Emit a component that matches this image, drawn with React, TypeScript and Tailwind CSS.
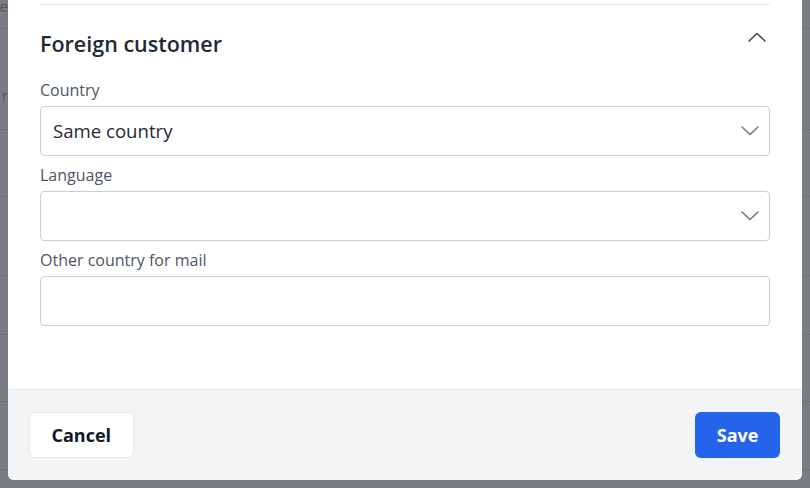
import React from 'react';

// Thin chevron used in the section header and in the select boxes
function Chevron({ up = false, className = '' }: { up?: boolean; className?: string }) {
  return (
    <svg width="18" height="10" viewBox="0 0 18 10" fill="none" className={className}>
      <path
        d={up ? 'M1 9 L9 1.5 L17 9' : 'M1 1 L9 8.5 L17 1'}
        stroke="currentColor"
        strokeWidth="1.5"
        strokeLinecap="round"
        strokeLinejoin="round"
      />
    </svg>
  );
}

function Field({ label, value, select }: { label: string; value?: string; select?: boolean }) {
  return (
    <div className="flex flex-col">
      <label className="text-[16px] leading-6 text-[#4b5563] mb-1">{label}</label>
      <div className="h-[50px] rounded border border-[#c9cdd3] bg-white flex items-center justify-between pl-3 pr-[10px]">
        <span className="text-[18.6px] text-[#1f2937]">{value}</span>
        {select && <Chevron className="text-[#6b7280]" />}
      </div>
    </div>
  );
}

// Dimmed page rows behind the dialog
const rowLines = [30, 132, 200, 280, 340, 408, 477];

export default function App() {
  const rows = rowLines.map((y, i) => y - (i === 0 ? 0 : rowLines[i - 1]));
  return (
    <div
      className="relative h-[488px] w-[810px] overflow-hidden bg-[#797c81]"
      style={{ fontFamily: '"Open Sans", "Noto Sans", sans-serif' }}
    >
      {/* background page */}
      <div className="flex flex-col">
        {rows.map((h, i) => (
          <div
            key={i}
            className={`border-b border-[#6d7075] flex items-start ${i === 1 ? 'pt-[60px]' : ''}`}
            style={{ height: h - 1 }}
          >
            <span className="w-2 overflow-hidden text-[15px] leading-[12px] text-[#56595e] whitespace-nowrap flex justify-end">
              {i === 0 ? 'ie' : i === 1 ? 'r' : ''}
            </span>
          </div>
        ))}
      </div>

      {/* dialog */}
      <div className="absolute left-2 right-2 top-0 h-[480px] bg-white rounded-b-md flex flex-col">
        <div className="flex-1 px-8 pt-1">
          <div className="border-t border-[#e5e7eb] pt-[25px]">
            <div className="flex items-center justify-between h-7">
              <h2 className="text-[21.5px] font-semibold text-[#1f2937] leading-7">Foreign customer</h2>
              <Chevron up className="text-[#374151] mr-[4px] -mt-[14px]" />
            </div>
            <div className="mt-5 flex flex-col gap-[7px]">
              <Field label="Country" value="Same country" select />
              <Field label="Language" select />
              <Field label="Other country for mail" />
            </div>
          </div>
        </div>

        <div className="h-[91px] border-t border-[#e5e7eb] bg-[#f3f4f6] rounded-b-md flex items-center justify-between pl-[21px] pr-[22px]">
          <button className="h-[46px] px-[21.5px] rounded-md border border-[#e5e7eb] bg-white text-[18px] font-bold text-[#111827]">
            Cancel
          </button>
          <button className="h-[46px] px-[21.5px] rounded-md bg-[#2563eb] text-[18px] font-bold text-white">
            Save
          </button>
        </div>
      </div>
    </div>
  );
}
